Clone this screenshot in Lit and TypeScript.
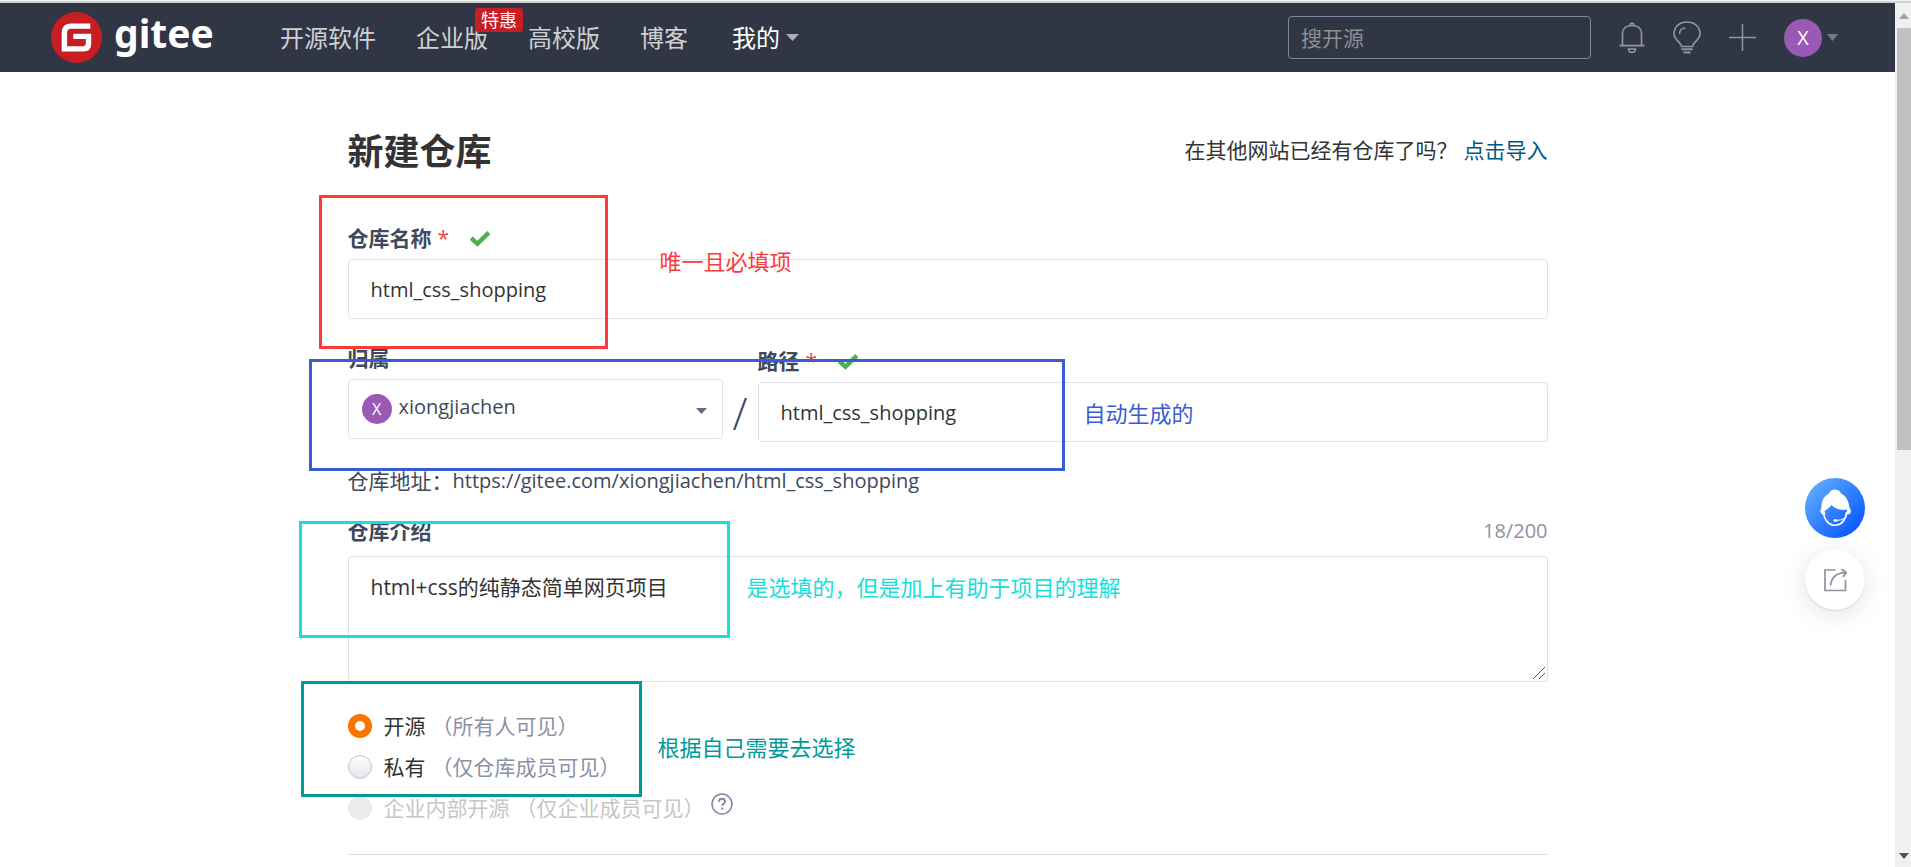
import { LitElement, html, css, svg } from "lit";
import { customElement, state } from "lit/decorators.js";

const checkIcon = html`<svg class="check" viewBox="0 0 22 17" width="22" height="17" aria-hidden="true">
  <path d="M2.2 8.2 8.4 13.8 19.8 2.6" fill="none" stroke="#4caf50" stroke-width="4.4" />
</svg>`;

@customElement("site-header")
export class SiteHeader extends LitElement {
  static styles = css`
    :host {
      display: block;
      font-family: "Open Sans", "Noto Sans CJK SC", sans-serif;
    }
    .bar {
      display: flex;
      align-items: center;
      height: 69px;
      padding: 0 57px 0 51px;
      box-sizing: border-box;
      background: #313644;
    }
    .brand {
      display: flex;
      align-items: center;
      gap: 12px;
      width: 229px;
      color: #fff;
      text-decoration: none;
    }
    .brand-name {
      font-family: "Noto Sans", sans-serif;
      font-size: 39px;
      line-height: 52px;
      font-weight: 700;
      padding-bottom: 10px;
    }
    .nav {
      display: flex;
      align-items: center;
      gap: 40px;
      flex: 1;
    }
    .link {
      position: relative;
      color: #cfd0d4;
      font-size: 24px;
      line-height: 36px;
      text-decoration: none;
      white-space: nowrap;
    }
    .badge {
      position: absolute;
      right: -35px;
      top: -12px;
      padding: 0 6px;
      border-radius: 3px;
      background: #c71d23;
      color: #fff;
      font-size: 18px;
      line-height: 24px;
    }
    .menu {
      display: flex;
      align-items: center;
      gap: 6px;
      margin-left: 4px;
      padding: 0;
      border: 0;
      background: none;
      color: #fff;
      font: inherit;
      font-size: 24px;
      line-height: 36px;
    }
    .search {
      box-sizing: border-box;
      width: 303px;
      height: 43px;
      padding: 0 12px;
      border: 1px solid #8088a0;
      border-radius: 4px;
      background: transparent;
      color: #fff;
      font: inherit;
      font-size: 21px;
      outline: none;
    }
    .search::placeholder {
      color: #8d8f94;
      opacity: 1;
    }
    .tools {
      display: flex;
      align-items: center;
      gap: 28px;
      margin-left: 28px;
    }
    .tool {
      display: flex;
      align-items: center;
      gap: 5px;
      padding: 0;
      border: 0;
      background: none;
      font: inherit;
    }
    .avatar {
      width: 38px;
      border-radius: 50%;
      background: #9b59b6;
      color: #fff;
      font-size: 20px;
      line-height: 38px;
      text-align: center;
    }
  `;

  render() {
    return html`
      <header class="bar">
        <a class="brand" href="#">
          <svg width="51" height="51" viewBox="0 0 51 51" aria-hidden="true">
            <circle cx="25.5" cy="25.5" r="25.5" fill="#c71d23" />
            <path
              d="M39.3 14.1H20.3Q13.4 14.1 13.4 20.6V36.9H32.3Q37.5 36.9 37.5 32.1V24.4H22.3"
              fill="none"
              stroke="#fff"
              stroke-width="5.4"
            />
          </svg>
          <span class="brand-name">gitee</span>
        </a>
        <nav class="nav">
          <a class="link" href="#">开源软件</a>
          <a class="link" href="#">企业版<span class="badge">特惠</span></a>
          <a class="link" href="#">高校版</a>
          <a class="link" href="#">博客</a>
          <button class="menu" type="button">
            我的
            <svg width="13" height="7" viewBox="0 0 13 7" aria-hidden="true">
              <path d="M0 0h13L6.5 7z" fill="#adafb4" />
            </svg>
          </button>
        </nav>
        <input class="search" type="search" placeholder="搜开源" aria-label="搜开源" />
        <div class="tools">
          <button class="tool" type="button" aria-label="通知">
            <svg width="26" height="32" viewBox="0 0 26 32" fill="none" stroke="#8f95aa" stroke-width="1.6" aria-hidden="true">
              <path d="M3.5 23.5V12C3.5 6.5 7.5 3.5 13 3.5S22.5 6.5 22.5 12V23.5M.5 23.6h25" />
              <path d="M11.5 3.3V1.7q1.5-1.2 3 0v1.6M9.5 27h7c-.4 4.6-6.6 4.6-7 0z" />
            </svg>
          </button>
          <button class="tool" type="button" aria-label="动态">
            <svg width="28" height="33" viewBox="0 0 28 33" fill="none" stroke="#8f95aa" stroke-width="1.6" aria-hidden="true">
              <path d="M8.5 25.5C8 21 1 19 1 12.5 1 5.5 7 1 14 1s13 4.5 13 11.5C27 19 20 21 19.5 25.5z" />
              <path d="M6.5 13c0-3.5 2.5-6 6-6" />
              <path d="M8.5 28.3h11M10.5 31.5h7" stroke-width="2" />
            </svg>
          </button>
          <button class="tool" type="button" aria-label="新建">
            <svg width="27" height="27" viewBox="0 0 27 27" fill="none" stroke="#8f95aa" stroke-width="1.5" aria-hidden="true">
              <path d="M13.5 0v27M0 13.5h27" />
            </svg>
          </button>
          <button class="tool" type="button" aria-label="账户">
            <span class="avatar">X</span>
            <svg width="11" height="7" viewBox="0 0 11 7" aria-hidden="true">
              <path d="M0 0h11L5.5 7z" fill="#747b8e" />
            </svg>
          </button>
        </div>
      </header>
    `;
  }
}

interface Visibility {
  id: string;
  name: string;
  note: string;
  disabled: boolean;
}

const visibilities: Visibility[] = [
  { id: "public", name: "开源", note: "（所有人可见）", disabled: false },
  { id: "private", name: "私有", note: "（仅仓库成员可见）", disabled: false },
  { id: "inner", name: "企业内部开源", note: "（仅企业成员可见）", disabled: true },
];

@customElement("repo-form")
export class RepoForm extends LitElement {
  @state() private visibility = "public";

  static styles = css`
    :host {
      display: block;
      font-family: "Open Sans", "Noto Sans CJK SC", sans-serif;
      font-size: 21px;
      line-height: 28px;
      color: #40485b;
    }
    .form {
      position: relative;
      max-width: 1200px;
      margin: 0 auto;
      padding-top: 56px;
    }
    .heading {
      display: flex;
      align-items: center;
      justify-content: space-between;
      margin-bottom: 48px;
      color: #333;
    }
    .title {
      margin: 0;
      font-size: 36px;
      line-height: 48px;
      font-weight: 700;
    }
    .import {
      display: flex;
      gap: 6px;
      padding-bottom: 4px;
    }
    .import-link {
      color: #005980;
      text-decoration: none;
    }
    .field {
      display: flex;
      flex-direction: column;
      gap: 7px;
    }
    .caption {
      display: flex;
      align-items: center;
      font-weight: 700;
    }
    .required {
      margin-left: 6px;
      color: #f0483e;
      font-weight: 400;
    }
    .check {
      margin-left: 20px;
    }
    .control {
      box-sizing: border-box;
      width: 100%;
      height: 60px;
      padding: 0 22px;
      border: 1px solid #dfe1e8;
      border-radius: 4px;
      background: #fff;
      color: #333;
      font: inherit;
      font-size: 20px;
      outline: none;
    }
    .row {
      display: flex;
      margin-top: 25px;
    }
    .owner {
      flex: 0 0 375px;
    }
    .path {
      flex: 1;
      padding-top: 3px;
    }
    .slash {
      flex: 0 0 35px;
      padding-top: 45px;
      font-size: 44px;
      font-weight: 300;
      line-height: 48px;
      text-align: center;
    }
    .select-wrap {
      position: relative;
    }
    .select {
      appearance: none;
      padding: 0 48px 4px 50px;
      color: #40485b;
      display: block;
    }
    .avatar {
      position: absolute;
      left: 14px;
      top: 15px;
      width: 30px;
      border-radius: 50%;
      background: #9b59b6;
      color: #fff;
      font-size: 16px;
      line-height: 30px;
      text-align: center;
    }
    .caret {
      position: absolute;
      right: 16px;
      top: 29px;
    }
    .address {
      display: flex;
      margin: 25px 0 22px;
    }
    .url {
      font-size: 20px;
    }
    .intro {
      gap: 11px;
    }
    .intro-head {
      display: flex;
      justify-content: space-between;
    }
    .count {
      color: #8c92a4;
      font-size: 20px;
    }
    .area-wrap {
      position: relative;
    }
    .area {
      display: block;
      height: 126px;
      padding: 14px 22px;
      font-size: 21px;
      line-height: 32px;
      resize: none;
    }
    .grip {
      position: absolute;
      right: 3px;
      bottom: 3px;
    }
    .options {
      margin: 23px 0 26px;
      padding: 0;
      border: 0;
    }
    .option {
      display: flex;
      align-items: center;
      height: 41px;
      color: #333;
    }
    .radio {
      appearance: none;
      box-sizing: border-box;
      width: 24px;
      height: 24px;
      margin: 0 12px 0 0;
      border: 1px solid #c3c5cb;
      border-radius: 50%;
      background: linear-gradient(#fff, #e3e5ec);
    }
    .radio:checked {
      border: 7px solid #fe7300;
      background: #fff;
    }
    .radio:disabled {
      border-color: #e8e8e8;
      background: #ebebeb;
    }
    .note {
      margin-left: 6px;
      color: #8c92a4;
    }
    .off,
    .off .note {
      color: #c6c6c6;
    }
    .help {
      display: flex;
      margin-left: 6px;
      padding: 0 0 8px;
      border: 0;
      background: none;
    }
    .rule {
      margin: 0;
      border: 0;
      border-top: 1px solid #d9dde4;
    }
    .frame {
      position: absolute;
      box-sizing: border-box;
      border: 3px solid currentColor;
      pointer-events: none;
    }
    .remark {
      position: absolute;
      font-size: 22px;
      line-height: 30px;
      white-space: nowrap;
      pointer-events: none;
    }
    .red {
      color: #fd3a3a;
    }
    .blue {
      color: #3a5bd6;
    }
    .cyan {
      color: #16e0dd;
    }
    .teal {
      color: #009a9a;
    }
    .frame.red {
      left: -29px;
      top: 123px;
      width: 289px;
      height: 154px;
    }
    .frame.blue {
      left: -39px;
      top: 287px;
      width: 756px;
      height: 112px;
    }
    .frame.cyan {
      left: -49px;
      top: 449px;
      width: 431px;
      height: 117px;
    }
    .frame.teal {
      left: -47px;
      top: 609px;
      width: 341px;
      height: 116px;
    }
    .remark.red {
      left: 312px;
      top: 174px;
    }
    .remark.blue {
      left: 736px;
      top: 326px;
    }
    .remark.cyan {
      left: 399px;
      top: 500px;
    }
    .remark.teal {
      left: 310px;
      top: 660px;
    }
  `;

  private renderOption(o: Visibility) {
    return html`
      <div class="option ${o.disabled ? "off" : ""}">
        <input
          class="radio"
          type="radio"
          name="visibility"
          id=${o.id}
          .checked=${this.visibility === o.id}
          ?disabled=${o.disabled}
          @change=${() => (this.visibility = o.id)}
        />
        <label for=${o.id}>${o.name}<span class="note">${o.note}</span></label>
        ${o.disabled
          ? html`<button class="help" type="button" aria-label="帮助">
              <svg width="22" height="22" viewBox="0 0 22 22" fill="none" stroke="#8087a0" stroke-width="1.5" aria-hidden="true">
                <circle cx="11" cy="11" r="10" />
                <path d="M8 8.8C8 6.8 9.3 5.8 11 5.8s3 1 3 2.7c0 2.2-2.8 2.2-2.8 4.6" stroke-width="1.9" />
                <path d="M11.2 14.6v2" stroke-width="2" />
              </svg>
            </button>`
          : ""}
      </div>
    `;
  }

  render() {
    return html`
      <form class="form">
        <div class="heading">
          <h1 class="title">新建仓库</h1>
          <div class="import">
            <span>在其他网站已经有仓库了吗？</span>
            <a class="import-link" href="#">点击导入</a>
          </div>
        </div>

        <div class="field">
          <label class="caption" for="name">仓库名称<span class="required">*</span>${checkIcon}</label>
          <input class="control" id="name" type="text" value="html_css_shopping" />
        </div>

        <div class="row">
          <div class="field owner">
            <label class="caption" for="owner">归属</label>
            <div class="select-wrap">
              <select class="control select" id="owner">
                <option>xiongjiachen</option>
              </select>
              <span class="avatar">X</span>
              <svg class="caret" width="11" height="6" viewBox="0 0 11 6" aria-hidden="true">
                <path d="M0 0h11L5.5 6z" fill="#646c80" />
              </svg>
            </div>
          </div>
          <span class="slash">/</span>
          <div class="field path">
            <label class="caption" for="path">路径<span class="required">*</span>${checkIcon}</label>
            <input class="control" id="path" type="text" value="html_css_shopping" />
          </div>
        </div>

        <div class="address">
          <span>仓库地址：</span>
          <span class="url">https://gitee.com/xiongjiachen/html_css_shopping</span>
        </div>

        <div class="field intro">
          <div class="intro-head">
            <label class="caption" for="intro">仓库介绍</label>
            <span class="count">18/200</span>
          </div>
          <div class="area-wrap">
            <textarea class="control area" id="intro" .value=${"html+css的纯静态简单网页项目"}></textarea>
            <svg class="grip" width="12" height="12" viewBox="0 0 12 12" stroke="#555" aria-hidden="true">
              <path d="M0 12 12 0M6 12l6-6" />
            </svg>
          </div>
        </div>

        <fieldset class="options" aria-label="是否开源">${visibilities.map((o) => this.renderOption(o))}</fieldset>
        <hr class="rule" />

        <div class="frame red"></div>
        <div class="frame blue"></div>
        <div class="frame cyan"></div>
        <div class="frame teal"></div>
        <span class="remark red">唯一且必填项</span>
        <span class="remark blue">自动生成的</span>
        <span class="remark cyan">是选填的，但是加上有助于项目的理解</span>
        <span class="remark teal">根据自己需要去选择</span>
      </form>
    `;
  }
}

@customElement("app-root")
export class AppRoot extends LitElement {
  static styles = css`
    :host {
      display: flex;
      flex-direction: column;
      height: 100vh;
      overflow: hidden;
      background: #fff;
    }
    .edge {
      flex: none;
      height: 2px;
      border-top: 1px solid #f3f3f3;
      background: #d2d2d2;
    }
    .view {
      position: relative;
      display: flex;
      flex: 1;
      min-height: 0;
    }
    .page {
      flex: 1;
      overflow: hidden;
    }
    .scroll {
      display: flex;
      flex-direction: column;
      align-items: center;
      box-sizing: border-box;
      width: 16px;
      padding: 10px 0 8px 2px;
      background: #f0f0f0;
    }
    .thumb {
      width: 100%;
      height: 422px;
      margin: 9px 0 auto;
      background: #c1c1c1;
    }
    .float {
      position: absolute;
      right: 46px;
      top: 475px;
      display: flex;
      flex-direction: column;
      gap: 12px;
    }
    .round {
      display: flex;
      align-items: center;
      justify-content: center;
      width: 60px;
      height: 60px;
      padding: 0;
      border: 0;
      border-radius: 50%;
      background: #fff;
      box-shadow: 0 1px 1px rgba(0, 0, 0, 0.12), 0 4px 28px rgba(0, 0, 0, 0.11);
    }
    .service {
      z-index: 1;
      background: linear-gradient(135deg, #5caaff 12%, #0a58ff 88%);
      box-shadow: none;
    }
  `;

  private arrow(up: boolean) {
    return html`<svg width="10" height="6" viewBox="0 0 10 6" aria-hidden="true">
      ${svg`<path d=${up ? "M0 6 5 0l5 6z" : "M0 0h10L5 6z"} fill=${up ? "#a3a3a3" : "#505050"} />`}
    </svg>`;
  }

  render() {
    return html`
      <div class="edge"></div>
      <div class="view">
        <div class="page">
          <site-header></site-header>
          <main><repo-form></repo-form></main>
        </div>
        <div class="scroll" aria-hidden="true">
          ${this.arrow(true)}
          <div class="thumb"></div>
          ${this.arrow(false)}
        </div>
        <aside class="float">
          <button class="round service" type="button" aria-label="客服">
            <svg width="34" height="38" viewBox="0 0 34 38" aria-hidden="true">
              <path
                d="M11 4.5C12 1.5 14.5.5 17 .5s5 1 6 4c5 2.5 8 7.5 8.5 14.5 1.5 1 2 4.5.5 5.5-.9 1-2.5 1-3.5.5l.6-4.5C24.5 22 17 20 13.5 16c-1.5 2-3.8 4.5-7 6l.8 3.2c-1.7.6-3 .5-4-.7-1.5-1.5-1-4 .2-5.5C3 12 6 7 11 4.5z"
                fill="#fff"
              />
              <path d="M5.5 23C6 31 11 36.2 17 36.2S28 31 28.7 23" fill="none" stroke="#fff" stroke-width="1.6" />
              <path d="M28.3 26.5c-2.5 4.5-6 4.6-10 4.8" fill="none" stroke="#fff" />
              <rect x="15.5" y="30.2" width="4" height="2.6" rx="1.3" fill="#fff" />
            </svg>
          </button>
          <button class="round" type="button" aria-label="分享">
            <svg width="23" height="24" viewBox="0 0 23 24" fill="none" stroke="#8c92a4" stroke-width="1.7" aria-hidden="true">
              <path d="M11.5 2H1v20.5h20.5V12" />
              <path d="M6.5 17.5C7.5 9.5 12 4.8 21.8 4.7M17.3 1.2l5 3.3-3.2 4.6" />
            </svg>
          </button>
        </aside>
      </div>
    `;
  }
}
